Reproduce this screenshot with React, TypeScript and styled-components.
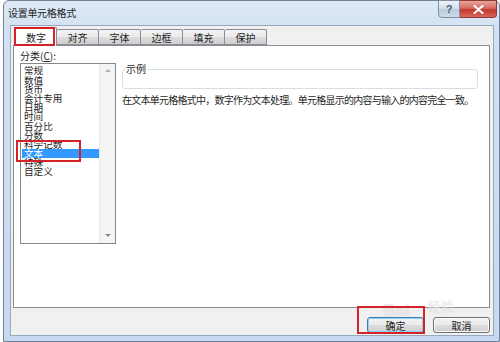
import React from "react";
import styled, { createGlobalStyle } from "styled-components";

const GlobalStyle = createGlobalStyle`
  html, body {
    margin: 0;
    padding: 0;
    width: 500px;
    height: 342px;
    overflow: hidden;
    background: #ffffff;
    font-family: "Noto Sans CJK SC", "Liberation Sans", sans-serif;
  }
`;

const Window = styled.div`
  position: relative;
  box-sizing: border-box;
  width: 497px;
  height: 342px;
  margin-left: 3px;
  display: flex;
  flex-direction: column;
  border: 1px solid #6f819a;
  border-radius: 6px 6px 0 0;
  background: linear-gradient(180deg, #dee9f5 0%, #d3e2f2 8%, #c6d9ee 100%);
`;

const TitleBar = styled.div`
  height: 24px;
  display: flex;
  align-items: flex-start;
  justify-content: space-between;
  padding-left: 4px;
`;

const Title = styled.div`
  margin-top: 6px;
  font-size: 10px;
  line-height: 12px;
  letter-spacing: -0.3px;
  color: #1e1e1e;
`;

const Caption = styled.div`
  display: flex;
  margin-right: 2px;
  margin-top: -1px;
`;

const CaptionButton = styled.div<{ $close?: boolean }>`
  box-sizing: border-box;
  width: ${p => (p.$close ? 37 : 22)}px;
  height: 18px;
  display: flex;
  align-items: center;
  justify-content: center;
  border: 1px solid ${p => (p.$close ? "#8c3a33" : "#7f8ea3")};
  border-left-width: ${p => (p.$close ? 0 : 1)}px;
  border-radius: ${p => (p.$close ? "0 0 4px 0" : "0 0 0 4px")};
  background: ${p =>
    p.$close
      ? "linear-gradient(180deg, #e8a59e 0%, #d46a5f 45%, #c1392c 55%, #d7675a 100%)"
      : "linear-gradient(180deg, #eef3f9 0%, #d5e0ec 45%, #bccbdc 55%, #cfdbe8 100%)"};
  color: ${p => (p.$close ? "#ffffff" : "#4a5a6e")};
  font-family: "Liberation Sans", sans-serif;
  font-size: 11px;
  font-weight: bold;
`;

const Frame = styled.div`
  flex: 1;
  display: flex;
  padding: 0 5px 5px 6px;
`;

const Client = styled.div`
  flex: 1;
  display: flex;
  flex-direction: column;
  background: #f0f0f0;
  border: 1px solid #97a8bd;
  padding: 0 3px 0 2px;
`;

const TabStrip = styled.div`
  height: 19px;
  display: flex;
  align-items: flex-end;
  padding-left: 2px;
  position: relative;
  z-index: 1;
`;

const Tab = styled.div<{ $active?: boolean }>`
  box-sizing: border-box;
  width: 42px;
  height: ${p => (p.$active ? 19 : 16)}px;
  margin-bottom: ${p => (p.$active ? -1 : 0)}px;
  display: flex;
  align-items: center;
  justify-content: center;
  border: 1px solid #898c95;
  border-bottom: ${p => (p.$active ? "none" : "1px solid #898c95")};
  border-left-width: ${p => (p.$active ? 1 : 0)}px;
  border-radius: 2px 2px 0 0;
  background: ${p =>
    p.$active ? "#ffffff" : "linear-gradient(180deg, #f2f2f2 0%, #ebebeb 50%, #dddddd 51%, #cfcfcf 100%)"};
  font-size: 10px;
  color: #1e1e1e;
  & + & {
    border-left-width: 0;
  }
`;

const Panel = styled.div`
  box-sizing: border-box;
  height: 263px;
  display: flex;
  gap: 6px;
  background: #ffffff;
  border: 1px solid #898c95;
  padding: 4px 6px 0 6px;
`;

const CategoryCol = styled.div`
  display: flex;
  flex-direction: column;
`;

const Label = styled.div`
  font-size: 10px;
  line-height: 12px;
  color: #1e1e1e;
  margin-bottom: 1px;
  u {
    text-decoration: underline;
  }
`;

const ListBox = styled.div`
  box-sizing: border-box;
  width: 96px;
  height: 181px;
  display: flex;
  border: 1px solid #828790;
`;

const Items = styled.div`
  flex: 1;
  padding-top: 2.4px;
`;

const Item = styled.div<{ $selected?: boolean }>`
  height: 9.2px;
  line-height: 9.2px;
  margin-left: 1px;
  padding-left: 2px;
  font-size: 9.6px;
  white-space: nowrap;
  color: ${p => (p.$selected ? "#ffffff" : "#1e1e1e")};
  background: ${p => (p.$selected ? "#3399ff" : "transparent")};
`;

const ScrollBar = styled.div`
  width: 15px;
  display: flex;
  flex-direction: column;
  justify-content: space-between;
  align-items: center;
  background: #f4f4f4;
  border-left: 1px solid #e6e6e6;
  padding: 5px 0 6px;
`;

const Arrow = styled.div<{ $down?: boolean }>`
  width: 0;
  height: 0;
  border-left: 3px solid transparent;
  border-right: 3px solid transparent;
  ${p => (p.$down ? "border-top: 3px solid #8a8a8a;" : "border-bottom: 3px solid #b0b0b0;")}
`;

const DetailCol = styled.div`
  flex: 1;
  display: flex;
  flex-direction: column;
  padding-top: 13px;
  padding-right: 5px;
`;

const GroupBox = styled.fieldset`
  box-sizing: border-box;
  height: 26px;
  margin: 0;
  padding: 0;
  border: 1px solid #d5dfe5;
  border-radius: 3px;
`;

const Legend = styled.legend`
  margin-left: 2px;
  padding: 0 1px;
  font-size: 10px;
  line-height: 12px;
  color: #1e1e1e;
`;

const Description = styled.div`
  margin-top: 5px;
  font-size: 10px;
  line-height: 12px;
  letter-spacing: -0.75px;
  white-space: nowrap;
  color: #1e1e1e;
`;

const Footer = styled.div`
  display: flex;
  justify-content: flex-end;
  gap: 9px;
  padding-top: 9px;
`;

const Button = styled.div<{ $default?: boolean }>`
  box-sizing: border-box;
  width: 57px;
  height: 16px;
  display: flex;
  align-items: center;
  justify-content: center;
  border: 1px solid ${p => (p.$default ? "#3c7fb1" : "#707070")};
  border-radius: 3px;
  background: linear-gradient(180deg, #f2f2f2 0%, #ebebeb 50%, #dddddd 51%, #cfcfcf 100%);
  box-shadow: inset 0 0 0 1px ${p => (p.$default ? "#8fd1f5" : "#fbfbfb")};
  font-size: 10px;
  color: #1e1e1e;
`;

const Highlight = styled.div<{ $x: number; $y: number; $w: number; $h: number }>`
  position: absolute;
  left: ${p => p.$x - 4}px;
  top: ${p => p.$y - 1}px;
  width: ${p => p.$w}px;
  height: ${p => p.$h}px;
  box-sizing: border-box;
  border: 2px solid #d2232a;
  pointer-events: none;
  z-index: 5;
`;

const Watermark = styled.div`
  position: absolute;
  left: 379px;
  top: 296px;
  display: flex;
  align-items: flex-end;
  gap: 4px;
  color: rgba(255, 255, 255, 0.55);
  text-shadow: 0 0 1px rgba(150, 150, 150, 0.45);
  pointer-events: none;
  z-index: 4;
`;

const WatermarkBrand = styled.span`
  font-family: "Liberation Sans", sans-serif;
  font-weight: bold;
  font-size: 17px;
  line-height: 20px;
`;

const WatermarkLabel = styled.span`
  font-size: 13px;
  line-height: 18px;
  margin-left: 14px;
  margin-bottom: 6px;
`;

const tabs = ["数字", "对齐", "字体", "边框", "填充", "保护"];
const categories = ["常规", "数值", "货币", "会计专用", "日期", "时间", "百分比", "分数", "科学记数", "文本", "特殊", "自定义"];

export default function App() {
  return (
    <>
      <GlobalStyle />
      <Window>
        <TitleBar>
          <Title>设置单元格格式</Title>
          <Caption>
            <CaptionButton>?</CaptionButton>
            <CaptionButton $close>
              <svg width="11" height="9" viewBox="0 0 11 9">
                <path d="M1.5 1 L9.5 8 M9.5 1 L1.5 8" stroke="#ffffff" strokeWidth="2.2" strokeLinecap="round" />
              </svg>
            </CaptionButton>
          </Caption>
        </TitleBar>
        <Frame>
          <Client>
            <TabStrip>
              {tabs.map((t, i) => (
                <Tab key={t} $active={i === 0}>
                  {t}
                </Tab>
              ))}
            </TabStrip>
            <Panel>
              <CategoryCol>
                <Label>
                  分类(<u>C</u>):
                </Label>
                <ListBox>
                  <Items>
                    {categories.map(c => (
                      <Item key={c} $selected={c === "文本"}>
                        {c}
                      </Item>
                    ))}
                  </Items>
                  <ScrollBar>
                    <Arrow />
                    <Arrow $down />
                  </ScrollBar>
                </ListBox>
              </CategoryCol>
              <DetailCol>
                <GroupBox>
                  <Legend>示例</Legend>
                </GroupBox>
                <Description>在文本单元格格式中，数字作为文本处理。单元格显示的内容与输入的内容完全一致。</Description>
              </DetailCol>
            </Panel>
            <Footer>
              <Button $default>确定</Button>
              <Button>取消</Button>
            </Footer>
          </Client>
        </Frame>
        <Watermark>
          <WatermarkBrand>Bai</WatermarkBrand>
          <WatermarkLabel>经验</WatermarkLabel>
        </Watermark>
        <Highlight $x={14} $y={27} $w={41} $h={19} />
        <Highlight $x={16} $y={140} $w={65} $h={22} />
        <Highlight $x={357} $y={306} $w={68} $h={28} />
      </Window>
    </>
  );
}
